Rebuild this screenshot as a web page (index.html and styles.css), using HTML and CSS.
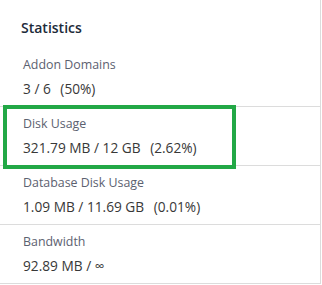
FILE: index.html
```html
<!DOCTYPE html>
<html lang="en">
<head>
    <meta charset="UTF-8">
    <title>Statistics</title>
    <link rel="stylesheet" href="styles.css">
</head>
<body>
    <div class="panel">
        <h3 class="panel-title">Statistics</h3>

        <div class="stat">
            <div class="stat-label">Addon Domains</div>
            <div class="stat-value">3 / 6 <span class="pct">(50%)</span></div>
        </div>
        <div class="stat highlighted">
            <div class="stat-label">Disk Usage</div>
            <div class="stat-value">321.79 MB / 12 GB <span class="pct">(2.62%)</span></div>
            <div class="highlight-box"></div>
        </div>
        <div class="stat">
            <div class="stat-label">Database Disk Usage</div>
            <div class="stat-value">1.09 MB / 11.69 GB <span class="pct">(0.01%)</span></div>
        </div>
        <div class="stat">
            <div class="stat-label">Bandwidth</div>
            <div class="stat-value">92.89 MB / &infin;</div>
        </div>
    </div>
</body>
</html>
```

FILE: styles.css
```css
body {
    margin: 0;
    background: #fff;
    font-family: 'Open Sans', 'Liberation Sans', sans-serif;
}
.panel {
    width: 320px;
    border-right: 1px solid #dcdcdc;
    border-bottom: 1px solid #dcdcdc;
    background: #fff;
}
.panel-title {
    margin: 0;
    padding: 18px 0 10px 21px;
    font-size: 14px;
    line-height: 20px;
    font-weight: 600;
    color: #1d2b3a;
}
.stat {
    position: relative;
    padding: 8px 0 8px 23px;
    height: 42px;
    border-bottom: 1px solid #dcdcdc;
}
.stat:last-child {
    border-bottom: none;
}
.stat-label {
    font-size: 12.4px;
    line-height: 17px;
    color: #5c6170;
}
.stat-value {
    margin-top: 6px;
    font-size: 13.7px;
    line-height: 19px;
    color: #383838;
}
.pct {
    margin-left: 6px;
}
.highlight-box {
    position: absolute;
    top: -2px;
    left: 3px;
    width: 225px;
    height: 56px;
    border: 4px solid #22a846;
}
```
